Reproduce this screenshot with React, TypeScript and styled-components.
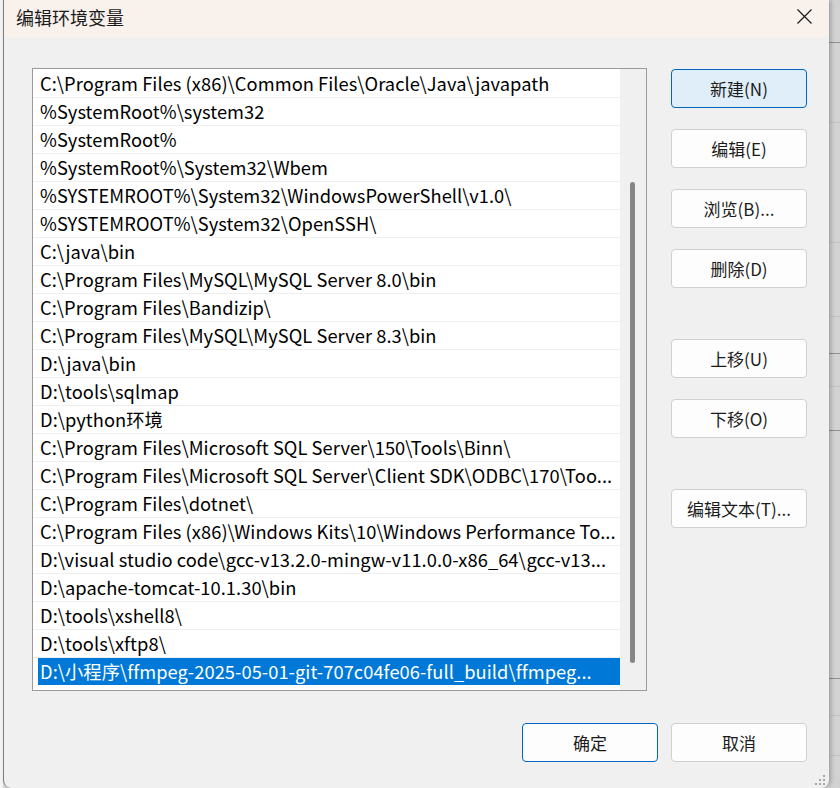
import React from 'react';
import styled, { createGlobalStyle } from 'styled-components';

const GlobalStyle = createGlobalStyle`
  html, body {
    margin: 0;
    padding: 0;
    background: #d6d6d6;
    overflow: hidden;
  }
  * { box-sizing: border-box; }
`;

const uiFont = `"Noto Sans CJK SC", "Noto Sans", sans-serif`;

const Page = styled.div`
  display: flex;
  width: 840px;
  height: 788px;
  font-family: ${uiFont};
`;

const LeftEdge = styled.div`
  width: 3px;
  background: #f4f4f4;
`;

const RightEdge = styled.div`
  flex: 1;
  display: flex;
  flex-direction: column;
  background: #d2d2d2;
`;

const EdgeBand = styled.div<{ $h: number; $line?: boolean }>`
  height: ${(p) => p.$h}px;
  border-bottom: 1px solid ${(p) => (p.$line ? '#8f8f8f' : '#c4c4c4')};
`;

const Dialog = styled.div`
  position: relative;
  width: 826px;
  height: 788px;
  display: flex;
  flex-direction: column;
  background: #f0f0f0;
  border-left: 1px solid #7d7d7d;
  border-radius: 0 0 8px 8px;
  box-shadow: 2px 0 4px rgba(0, 0, 0, 0.25);
`;

const TitleBar = styled.div`
  height: 37px;
  display: flex;
  align-items: center;
  justify-content: space-between;
  background: #f9f1ec;
  padding: 0 17px 0 12px;
`;

const Title = styled.div`
  font-size: 18px;
  color: #1b1b1b;
  line-height: 1;
  margin-top: -4px;
`;

const CloseButton = styled.div`
  width: 15px;
  height: 15px;
  margin-top: -5px;
  display: flex;
`;

const Body = styled.div`
  flex: 1;
  display: flex;
  flex-direction: column;
  padding: 31px 22px 0 28px;
`;

const Main = styled.div`
  display: flex;
  gap: 24px;
`;

const ListBox = styled.div`
  width: 615px;
  height: 623px;
  display: flex;
  background: #ffffff;
  border: 1px solid #9a9a9a;
`;

const Rows = styled.div`
  flex: 1;
  min-width: 0;
  padding-top: 1px;
  display: flex;
  flex-direction: column;
`;

const Row = styled.div<{ $selected?: boolean }>`
  height: 28px;
  flex: none;
  display: flex;
  align-items: center;
  border-bottom: 1px solid ${(p) => (p.$selected ? 'transparent' : '#efefef')};
  padding-left: ${(p) => (p.$selected ? '5px' : '0')};
`;

const RowText = styled.div<{ $selected?: boolean }>`
  flex: 1;
  height: 100%;
  display: flex;
  align-items: center;
  padding: 0 0 1px ${(p) => (p.$selected ? '2px' : '7px')};
  font-size: 18.3px;
  letter-spacing: 0.05px;
  color: ${(p) => (p.$selected ? '#ffffff' : '#000000')};
  background: ${(p) => (p.$selected ? '#0078d7' : 'transparent')};
  white-space: nowrap;
  overflow: hidden;
  text-overflow: ellipsis;
`;

const ScrollTrack = styled.div`
  width: 26px;
  flex: none;
  display: flex;
  flex-direction: column;
  padding: 113px 10px 27px 10px;
  background: #f0f0f0;
`;

const Thumb = styled.div`
  flex: 1;
  width: 5px;
  border-radius: 3px;
  background: #868686;
`;

const SideButtons = styled.div`
  display: flex;
  flex-direction: column;
  padding-top: 1px;
`;

const Button = styled.div<{ $default?: boolean; $focused?: boolean; $space?: number }>`
  width: 136px;
  height: 39px;
  margin-top: ${(p) => p.$space ?? 0}px;
  display: flex;
  align-items: center;
  justify-content: center;
  font-size: 17px;
  color: #1b1b1b;
  background: ${(p) => (p.$default ? '#e0eef9' : '#fdfdfd')};
  border: 1px solid ${(p) => (p.$default || p.$focused ? '#0067c0' : '#d0d0d0')};
  border-radius: 4px;
  padding-bottom: 1px;
`;

const Footer = styled.div`
  display: flex;
  justify-content: flex-end;
  gap: 13px;
  margin-top: 32px;
`;

const Grip = styled.svg`
  position: absolute;
  right: 3px;
  bottom: 2px;
`;

const paths = [
  'C:\\Program Files (x86)\\Common Files\\Oracle\\Java\\javapath',
  '%SystemRoot%\\system32',
  '%SystemRoot%',
  '%SystemRoot%\\System32\\Wbem',
  '%SYSTEMROOT%\\System32\\WindowsPowerShell\\v1.0\\',
  '%SYSTEMROOT%\\System32\\OpenSSH\\',
  'C:\\java\\bin',
  'C:\\Program Files\\MySQL\\MySQL Server 8.0\\bin',
  'C:\\Program Files\\Bandizip\\',
  'C:\\Program Files\\MySQL\\MySQL Server 8.3\\bin',
  'D:\\java\\bin',
  'D:\\tools\\sqlmap',
  'D:\\python环境',
  'C:\\Program Files\\Microsoft SQL Server\\150\\Tools\\Binn\\',
  'C:\\Program Files\\Microsoft SQL Server\\Client SDK\\ODBC\\170\\Too...',
  'C:\\Program Files\\dotnet\\',
  'C:\\Program Files (x86)\\Windows Kits\\10\\Windows Performance To...',
  'D:\\visual studio code\\gcc-v13.2.0-mingw-v11.0.0-x86_64\\gcc-v13...',
  'D:\\apache-tomcat-10.1.30\\bin',
  'D:\\tools\\xshell8\\',
  'D:\\tools\\xftp8\\',
  'D:\\小程序\\ffmpeg-2025-05-01-git-707c04fe06-full_build\\ffmpeg...',
];

const selectedIndex = paths.length - 1;

const sideButtons = [
  { label: '新建(N)', isDefault: true, space: 0 },
  { label: '编辑(E)', space: 21 },
  { label: '浏览(B)...', space: 21 },
  { label: '删除(D)', space: 21 },
  { label: '上移(U)', space: 51 },
  { label: '下移(O)', space: 21 },
  { label: '编辑文本(T)...', space: 51 },
];

const edgeBands = [
  { h: 43, line: true },
  { h: 80 },
  { h: 120 },
  { h: 74 },
  { h: 37, line: true },
  { h: 33 },
  { h: 44, line: true },
  { h: 248, line: true },
  { h: 37 },
  { h: 40 },
];

export default function App() {
  return (
    <>
      <GlobalStyle />
      <Page>
        <LeftEdge />
        <Dialog>
          <TitleBar>
            <Title>编辑环境变量</Title>
            <CloseButton>
              <svg width="15" height="15" viewBox="0 0 15 15">
                <path d="M0.5 0.5 L14.5 14.5 M14.5 0.5 L0.5 14.5" stroke="#1b1b1b" strokeWidth="1.2" fill="none" />
              </svg>
            </CloseButton>
          </TitleBar>
          <Body>
            <Main>
              <ListBox>
                <Rows>
                  {paths.map((p, i) => (
                    <Row key={i} $selected={i === selectedIndex}>
                      <RowText $selected={i === selectedIndex}>{p}</RowText>
                    </Row>
                  ))}
                </Rows>
                <ScrollTrack>
                  <Thumb />
                </ScrollTrack>
              </ListBox>
              <SideButtons>
                {sideButtons.map((b) => (
                  <Button key={b.label} $default={b.isDefault} $space={b.space}>
                    {b.label}
                  </Button>
                ))}
              </SideButtons>
            </Main>
            <Footer>
              <Button $focused>确定</Button>
              <Button>取消</Button>
            </Footer>
          </Body>
          <Grip width="12" height="12" viewBox="0 0 12 12">
            {[
              [9, 1],
              [5, 5],
              [9, 5],
              [1, 9],
              [5, 9],
              [9, 9],
            ].map(([x, y]) => (
              <rect key={`${x}-${y}`} x={x} y={y} width="2" height="2" fill="#a8a8a8" />
            ))}
          </Grip>
        </Dialog>
        <RightEdge>
          {edgeBands.map((b, i) => (
            <EdgeBand key={i} $h={b.h} $line={b.line} />
          ))}
        </RightEdge>
      </Page>
    </>
  );
}
